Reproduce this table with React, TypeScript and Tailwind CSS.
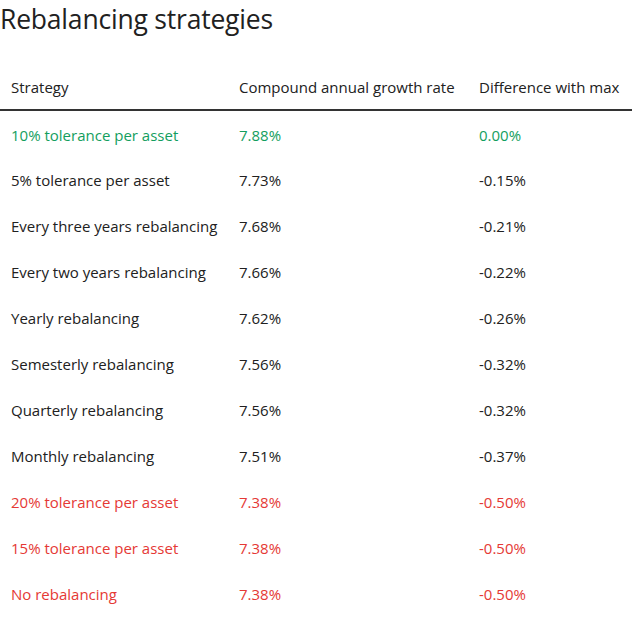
const rows = [
  { name: '10% tolerance per asset', cagr: '7.88%', diff: '0.00%', tone: 'best' },
  { name: '5% tolerance per asset', cagr: '7.73%', diff: '-0.15%' },
  { name: 'Every three years rebalancing', cagr: '7.68%', diff: '-0.21%' },
  { name: 'Every two years rebalancing', cagr: '7.66%', diff: '-0.22%' },
  { name: 'Yearly rebalancing', cagr: '7.62%', diff: '-0.26%' },
  { name: 'Semesterly rebalancing', cagr: '7.56%', diff: '-0.32%' },
  { name: 'Quarterly rebalancing', cagr: '7.56%', diff: '-0.32%' },
  { name: 'Monthly rebalancing', cagr: '7.51%', diff: '-0.37%' },
  { name: '20% tolerance per asset', cagr: '7.38%', diff: '-0.50%', tone: 'worst' },
  { name: '15% tolerance per asset', cagr: '7.38%', diff: '-0.50%', tone: 'worst' },
  { name: 'No rebalancing', cagr: '7.38%', diff: '-0.50%', tone: 'worst' },
];

export default function App() {
  return (
    <div className="w-[632px] bg-white text-[#212121] font-['Segoe_UI','Open_Sans',sans-serif]">
      <h2 className="h-[40px] text-[26.5px] leading-[38px] -tracking-[0.2px]">Rebalancing strategies</h2>
      <table className="mt-[23px] w-full border-collapse text-[15px]">
        <thead>
          <tr className="h-[47px] border-b-2 border-[#333333]">
            <th className="w-[228px] pl-[11px] pt-[3px] text-left font-normal">Strategy</th>
            <th className="w-[240px] pl-[11px] pt-[3px] text-left font-normal">Compound annual growth rate</th>
            <th className="pl-[11px] pt-[3px] text-left font-normal">Difference with max</th>
          </tr>
        </thead>
        <tbody>
          {rows.map((r) => (
            <tr
              key={r.name}
              className={
                'h-[46px] ' +
                (r.tone === 'best' ? 'text-[#139e5e]' : r.tone === 'worst' ? 'text-[#e53935]' : '')
              }
            >
              <td className="pl-[11px] pt-[3px]">{r.name}</td>
              <td className="pl-[11px] pt-[3px]">{r.cagr}</td>
              <td className="pl-[11px] pt-[3px]">{r.diff}</td>
            </tr>
          ))}
        </tbody>
      </table>
    </div>
  );
}
